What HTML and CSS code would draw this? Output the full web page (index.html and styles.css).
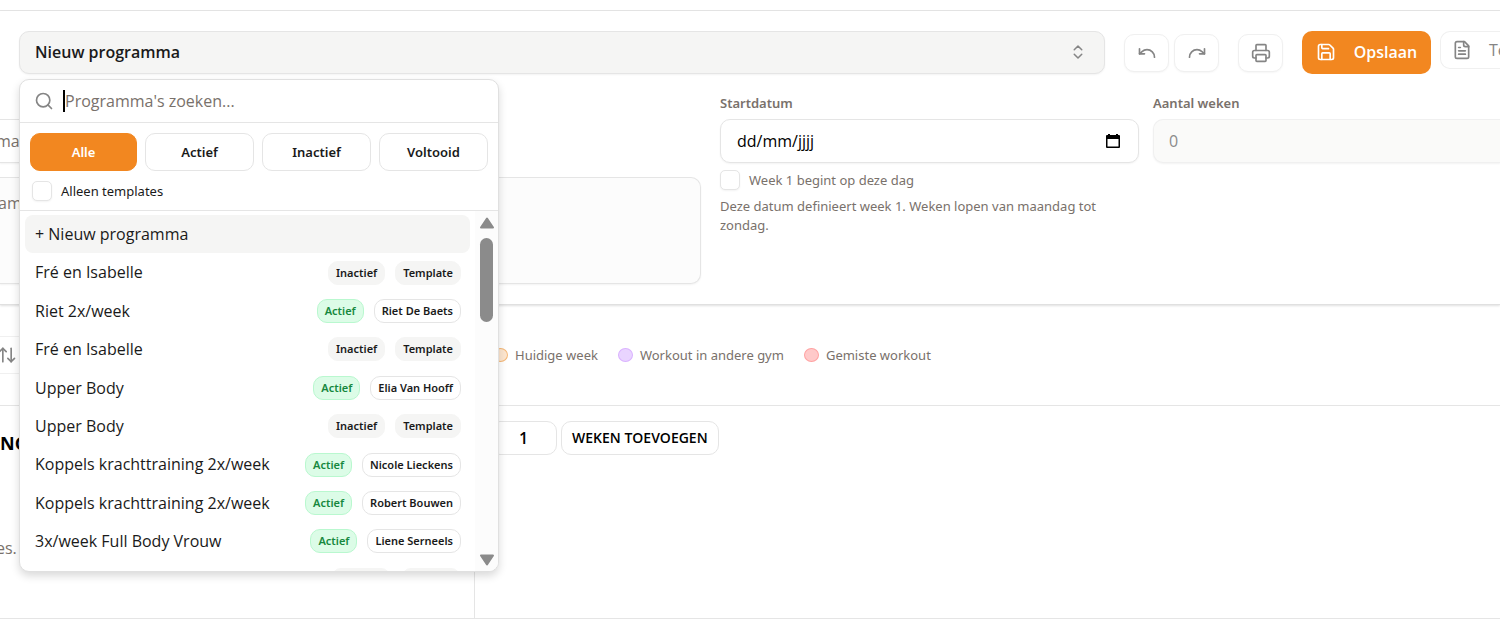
FILE: index.html
```html
<!DOCTYPE html>
<html lang="nl">
<head>
  <meta charset="UTF-8">
  <title>Nieuw programma</title>
  <link rel="stylesheet" href="styles.css">
</head>
<body>

  <header class="topbar"></header>

  <section class="editor">
    <div class="toolbar">
      <div class="picker">
        <button class="picker-trigger" aria-expanded="true">
          <span>Nieuw programma</span>
          <svg class="icon" width="18" height="18" viewBox="0 0 24 24"><path d="m7 15 5 5 5-5"/><path d="m7 9 5-5 5 5"/></svg>
        </button>

        <div class="dropdown">
          <div class="search">
            <svg class="icon" width="20" height="20" viewBox="0 0 24 24"><circle cx="11" cy="11" r="8"/><path d="m21 21-4.3-4.3"/></svg>
            <span class="caret"></span>
            <input type="text" aria-label="Programma's zoeken" placeholder="Programma's zoeken...">
          </div>

          <div class="filters">
            <div class="filter-buttons">
              <button class="filter active">Alle</button>
              <button class="filter">Actief</button>
              <button class="filter">Inactief</button>
              <button class="filter">Voltooid</button>
            </div>
            <label class="check"><input type="checkbox"> Alleen templates</label>
          </div>

          <div class="results">
            <ul class="list">
              <li class="item selected">+ Nieuw programma</li>
              <li class="item">Fré en Isabelle <span class="badges"><span class="badge gray">Inactief</span><span class="badge gray">Template</span></span></li>
              <li class="item">Riet 2x/week <span class="badges"><span class="badge green">Actief</span><span class="badge">Riet De Baets</span></span></li>
              <li class="item">Fré en Isabelle <span class="badges"><span class="badge gray">Inactief</span><span class="badge gray">Template</span></span></li>
              <li class="item">Upper Body <span class="badges"><span class="badge green">Actief</span><span class="badge">Elia Van Hooff</span></span></li>
              <li class="item">Upper Body <span class="badges"><span class="badge gray">Inactief</span><span class="badge gray">Template</span></span></li>
              <li class="item">Koppels krachttraining 2x/week <span class="badges"><span class="badge green">Actief</span><span class="badge">Nicole Lieckens</span></span></li>
              <li class="item">Koppels krachttraining 2x/week <span class="badges"><span class="badge green">Actief</span><span class="badge">Robert Bouwen</span></span></li>
              <li class="item">3x/week Full Body Vrouw <span class="badges"><span class="badge green">Actief</span><span class="badge">Liene Serneels</span></span></li>
              <li class="item"><span class="badges"><span class="badge gray blank"></span><span class="badge gray blank"></span></span></li>
            </ul>
            <div class="scrollbar">
              <svg width="16" height="12" viewBox="0 0 16 12"><path d="M8 1.500 14 10.500H2Z"/></svg>
              <div class="thumb"></div>
              <svg class="down" width="16" height="12" viewBox="0 0 16 12"><path d="M8 10.500 14 1.500H2Z"/></svg>
            </div>
          </div>
        </div>
      </div>

      <div class="history">
        <button class="icon-btn" aria-label="Ongedaan maken"><svg class="icon" width="20" height="20" viewBox="0 0 24 24"><path d="M3 7v6h6"/><path d="M21 17a9 9 0 0 0-9-9 9 9 0 0 0-6 2.3L3 13"/></svg></button>
        <button class="icon-btn" aria-label="Opnieuw"><svg class="icon" width="20" height="20" viewBox="0 0 24 24"><path d="M21 7v6h-6"/><path d="M3 17a9 9 0 0 1 9-9 9 9 0 0 1 6 2.3l3 2.7"/></svg></button>
      </div>
      <button class="icon-btn" aria-label="Afdrukken"><svg class="icon" width="20" height="20" viewBox="0 0 24 24"><path d="M6 18H4a2 2 0 0 1-2-2v-5a2 2 0 0 1 2-2h16a2 2 0 0 1 2 2v5a2 2 0 0 1-2 2h-2"/><path d="M6 9V3a1 1 0 0 1 1-1h10a1 1 0 0 1 1 1v6"/><rect x="6" y="14" width="12" height="8" rx="1"/></svg></button>
      <div class="actions">
        <button class="save"><svg class="icon" width="20" height="20" viewBox="0 0 24 24"><path d="M15.2 3a2 2 0 0 1 1.4.6l3.8 3.8a2 2 0 0 1 .6 1.4V19a2 2 0 0 1-2 2H5a2 2 0 0 1-2-2V5a2 2 0 0 1 2-2z"/><path d="M17 21v-7a1 1 0 0 0-1-1H8a1 1 0 0 0-1 1v7"/><path d="M7 3v4a1 1 0 0 0 1 1h7"/></svg>Opslaan</button>
        <button class="template-btn"><svg class="icon" width="20" height="20" viewBox="0 0 24 24"><path d="M15 2H6a2 2 0 0 0-2 2v16a2 2 0 0 0 2 2h12a2 2 0 0 0 2-2V7Z"/><path d="M14 2v4a2 2 0 0 0 2 2h4"/><path d="M10 9H8"/><path d="M16 13H8"/><path d="M16 17H8"/></svg>Te</button>
      </div>
    </div>

    <div class="form">
      <div class="col-info">
        <input class="field name" type="text" aria-label="Naam" placeholder="ma">
        <textarea class="field description" aria-label="Beschrijving" placeholder="am"></textarea>
      </div>

      <div class="col-date">
        <label class="label" for="start">Startdatum</label>
        <div class="field date">
          <input type="text" id="start" placeholder="dd/mm/jjjj">
          <svg width="14" height="16" viewBox="0 0 14 16"><path d="M2 1h2v1h6V1h2v1h1a1 1 0 0 1 1 1v11a1 1 0 0 1-1 1H1a1 1 0 0 1-1-1V3a1 1 0 0 1 1-1h1zM1.500 6v7.500h11V6z" fill-rule="evenodd"/></svg>
        </div>
        <label class="check muted"><input type="checkbox"> Week 1 begint op deze dag</label>
        <p class="hint">Deze datum definieert week 1. Weken lopen van maandag tot zondag.</p>
      </div>

      <div class="col-weeks">
        <label class="label" for="weeks">Aantal weken</label>
        <input class="field weeks" type="text" id="weeks" value="0" disabled>
      </div>
    </div>
  </section>

  <section class="legend-bar">
    <button class="sort" aria-label="Sorteren"><svg class="icon" width="20" height="20" viewBox="0 0 24 24"><path d="m3 8 4-4 4 4"/><path d="M7 4v16"/><path d="m21 16-4 4-4-4"/><path d="M17 20V4"/></svg></button>
    <div class="legend">
      <span class="legend-item"><i class="dot orange"></i>Huidige week</span>
      <span class="legend-item"><i class="dot purple"></i>Workout in andere gym</span>
      <span class="legend-item"><i class="dot red"></i>Gemiste workout</span>
    </div>
  </section>

  <section class="board">
    <div class="exercises">
      <h2>NG</h2>
      <p>es.</p>
    </div>
    <div class="add-weeks">
      <input type="text" aria-label="Aantal weken toevoegen" value="1">
      <button>WEKEN TOEVOEGEN</button>
    </div>
  </section>

</body>
</html>
```
FILE: styles.css
```css
* {
  box-sizing: border-box;
}
body {
  margin: 0;
  font-family: "Open Sans", "Noto Sans", sans-serif;
  font-size: 16px;
  line-height: 20px;
  color: #1a1a1a;
  background: #fff;
  overflow: hidden;
}
button,
input,
textarea {
  font: inherit;
  color: inherit;
}
button {
  display: flex;
  align-items: center;
  justify-content: center;
  background: #fff;
  cursor: pointer;
  padding: 0;
}
.icon {
  flex: none;
  fill: none;
  stroke: #858585;
  stroke-width: 2;
  stroke-linecap: round;
  stroke-linejoin: round;
}
.topbar {
  height: 11px;
  border-bottom: 1px solid #e5e5e5;
}

/* toolbar */
.editor {
  height: 294px;
  padding-top: 20px;
  border-bottom: 1px solid #e0e0e0;
  box-shadow: 0 1px 2px rgba(0, 0, 0, 0.12);
}
.toolbar {
  display: flex;
  align-items: center;
  gap: 19px;
  padding-left: 19px;
}
.picker {
  position: relative;
  flex: 1;
}
.picker-trigger {
  width: 100%;
  height: 43px;
  justify-content: space-between;
  padding: 0 17px 2px 15px;
  font-weight: 600;
  background: #f5f5f4;
  border: 1px solid #e5e5e5;
  border-radius: 10px;
  box-shadow: 0 1px 2px rgba(0, 0, 0, 0.05);
}
.history {
  display: flex;
  gap: 5px;
}
.icon-btn {
  width: 45px;
  height: 38px;
  border: 1px solid #f0f0f0;
  border-radius: 10px;
  box-shadow: 0 1px 2px rgba(0, 0, 0, 0.04);
}
.actions {
  display: flex;
  align-items: flex-start;
  gap: 9px;
}
.save {
  width: 129px;
  height: 43px;
  padding-bottom: 2px;
  gap: 18px;
  font-weight: 600;
  color: #fff;
  background: #f28720;
  border: none;
  border-radius: 10px;
}
.save .icon {
  stroke: #fff;
}
.template-btn {
  width: 60px;
  height: 38px;
  justify-content: flex-start;
  gap: 17px;
  padding-left: 11px;
  font-weight: 500;
  color: #858585;
  border: 1px solid #f0f0f0;
  border-right: none;
  border-radius: 10px 0 0 10px;
  overflow: hidden;
}

/* dropdown */
.dropdown {
  position: absolute;
  top: 48px;
  left: 0;
  z-index: 10;
  width: 480px;
  height: 493px;
  display: flex;
  flex-direction: column;
  background: #fff;
  border: 1px solid #e0e0e0;
  border-radius: 10px;
  box-shadow: 0 4px 8px rgba(0, 0, 0, 0.15);
  overflow: hidden;
}
.search {
  display: flex;
  align-items: center;
  height: 43px;
  padding-left: 14px;
  border-bottom: 1px solid #e5e5e5;
}
.search input {
  flex: 1;
  border: none;
  outline: none;
  padding: 0;
}
.caret {
  width: 2px;
  height: 22px;
  margin-left: 9px;
  background: #000;
}
::placeholder {
  color: #79716b;
  opacity: 1;
}
.filters {
  padding: 10px;
  height: 88px;
  border-bottom: 1px solid #e5e5e5;
}
.filter-buttons {
  display: grid;
  grid-template-columns: 107fr 109fr 109fr 109fr;
  gap: 8px;
}
.filter {
  height: 38px;
  font-family: "Noto Sans", sans-serif;
  font-size: 13px;
  font-weight: 600;
  border: 1px solid #e5e5e5;
  border-radius: 10px;
}
.filter.active {
  color: #fff;
  background: #f28720;
  border-color: #f28720;
}
.check {
  display: flex;
  align-items: center;
  gap: 9px;
  font-family: "Noto Sans", sans-serif;
  font-size: 13px;
}
.filters .check {
  padding: 10px 2px;
}
.check input {
  appearance: none;
  width: 20px;
  height: 20px;
  margin: 0;
  background: #fff;
  border: 1px solid #e5e5e5;
  border-radius: 5px;
  box-shadow: 0 1px 2px rgba(0, 0, 0, 0.05);
}
.results {
  display: flex;
  flex: 1;
  min-height: 0;
}
.list {
  flex: 1;
  margin: 0;
  padding: 4px 5px;
  list-style: none;
  line-height: 1.4;
  overflow: hidden;
}
.item {
  display: flex;
  align-items: center;
  justify-content: space-between;
  padding: 8px 9px 8px 10px;
}
.item.selected {
  background: #f5f5f4;
  border-radius: 8px;
}
.badges {
  display: flex;
  gap: 10px;
  margin: -1px 0 -1px auto;
}
.badge {
  height: 24px;
  padding: 0 7px;
  font-family: "Noto Sans", sans-serif;
  font-size: 11px;
  font-weight: 600;
  line-height: 22px;
  border: 1px solid #e5e5e5;
  border-radius: 10px;
}
.badge.gray {
  background: #f5f5f4;
  border-color: #f5f5f4;
}
.badge.green {
  color: #16883e;
  background: #dcfce7;
  border-color: #b9f8cf;
}
.badge.blank {
  width: 60px;
}
.scrollbar {
  display: flex;
  flex-direction: column;
  align-items: center;
  width: 23px;
  padding: 6px 0 5px;
  background: #fcfcfc;
  fill: #8b8b8b;
  stroke: #8b8b8b;
  stroke-width: 2;
  stroke-linejoin: round;
}
.thumb {
  width: 13px;
  height: 84px;
  margin-top: 9px;
  background: #8b8b8b;
  border-radius: 7px;
}
.scrollbar .down {
  margin-top: auto;
}

/* form */
.form {
  display: grid;
  grid-template-columns: 701fr 438fr 361fr;
  padding-top: 19px;
}
.field {
  display: block;
  width: 100%;
  height: 44px;
  background: #fff;
  border: 1px solid #e5e5e5;
  border-radius: 10px;
  box-shadow: 0 1px 2px rgba(0, 0, 0, 0.05);
}
.col-info {
  padding-top: 26px;
}
.name,
.description {
  padding: 0;
  border-left: none;
  border-radius: 0 10px 10px 0;
}
.name {
  width: 480px;
}
.name,
.exercises p {
  text-indent: -4px;
}
.description {
  height: 107px;
  margin-top: 14px;
  padding-top: 15px;
  text-indent: -2px;
  background: #fcfcfc;
  resize: none;
}
.col-date {
  margin-left: 19px;
}
.col-weeks {
  margin-left: 14px;
}
.label {
  display: block;
  margin-bottom: 6px;
  font-family: "Noto Sans", sans-serif;
  font-size: 13px;
  font-weight: 600;
  color: #79716b;
}
.date {
  display: flex;
  align-items: center;
  padding: 0 18px 0 16px;
}
.date input {
  flex: 1;
  min-width: 0;
  padding: 0;
  border: none;
}
.date ::placeholder {
  color: #000;
}
.weeks {
  padding: 0 15px;
  color: #8b8b8b;
  background: #fafaf9;
  border: 1px solid #f0f0f0;
  border-right: none;
  border-radius: 10px 0 0 10px;
}
.muted,
.hint {
  color: #79716b;
}
.col-date .check {
  margin-top: 7px;
}
.hint {
  margin: 7px 0 0;
  font-family: "Noto Sans", sans-serif;
  font-size: 13px;
  line-height: 19px;
}

/* legend */
.legend-bar {
  display: flex;
  align-items: center;
  height: 101px;
  border-bottom: 1px solid #e5e5e5;
}
.sort {
  width: 30px;
  height: 38px;
  justify-content: flex-start;
  border: 1px solid #f0f0f0;
  border-left: none;
}
.sort .icon {
  margin-left: -3px;
}
.legend {
  display: flex;
  gap: 20px;
  margin-left: 463px;
  font-family: "Noto Sans", sans-serif;
  font-size: 13px;
  color: #79716b;
}
.legend-item {
  display: flex;
  align-items: center;
  gap: 7px;
}
.dot {
  width: 15px;
  height: 14px;
  border: 1px solid;
  border-radius: 50%;
}
.orange {
  background: #fde6cf;
  border-color: #f5b877;
}
.purple {
  background: #e9d4ff;
  border-color: #dab2ff;
}
.red {
  background: #ffc9c9;
  border-color: #ffa2a2;
}

/* board */
.board {
  display: flex;
  height: 213px;
  border-bottom: 1px solid #e5e5e5;
}
.exercises {
  width: 475px;
  padding-top: 27px;
  border-right: 1px solid #e5e5e5;
}
.exercises h2 {
  margin: 0;
  font-size: 18px;
  line-height: 20px;
  color: #000;
}
.exercises p {
  margin: 85px 0 0;
  color: #79716b;
}
.add-weeks {
  display: flex;
  gap: 4px;
  padding: 15px;
}
.add-weeks input,
.add-weeks button {
  height: 34px;
  border: 1px solid #e5e5e5;
  border-radius: 10px;
  font-weight: 600;
  color: #000;
}
.add-weeks input {
  width: 67px;
  padding: 0;
  text-align: center;
}
.add-weeks button {
  padding: 0 10px;
  font-size: 14px;
}
```
